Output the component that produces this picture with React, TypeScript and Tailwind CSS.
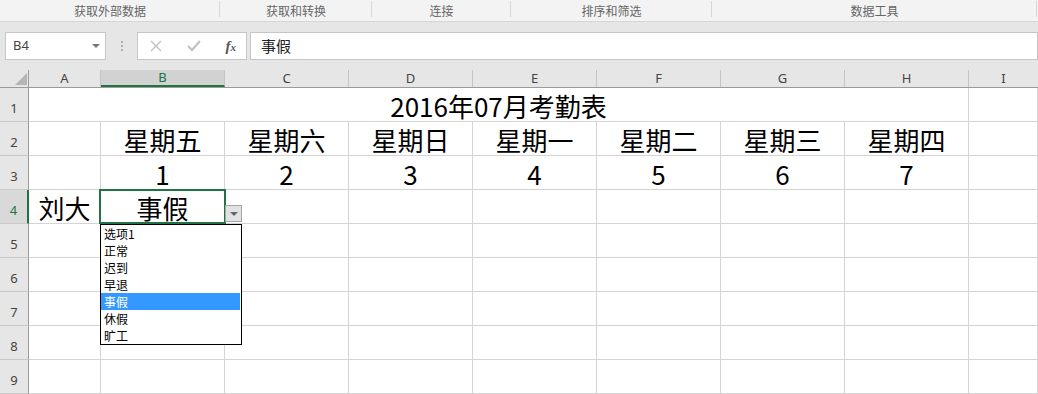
import React from "react";

const cjk = { fontFamily: '"Noto Sans CJK SC", "Noto Sans", sans-serif' };
const ui = { fontFamily: '"Noto Sans", "Noto Sans CJK SC", sans-serif' };

const groups = [
  { label: "获取外部数据", w: "w-[220px]" },
  { label: "获取和转换", w: "w-[152px]" },
  { label: "连接", w: "w-[139px]" },
  { label: "排序和筛选", w: "w-[201px]" },
  { label: "数据工具", w: "w-[325px]" },
];

const cols = ["A", "B", "C", "D", "E", "F", "G", "H"];
const weekdays = ["星期五", "星期六", "星期日", "星期一", "星期二", "星期三", "星期四"];
const options = ["选项1", "正常", "迟到", "早退", "事假", "休假", "旷工"];

const Cell = ({
  w,
  children,
  className = "",
}: {
  w: string;
  children?: React.ReactNode;
  className?: string;
}) => (
  <div
    className={`${w} shrink-0 h-full border-r border-b border-[#d4d4d4] flex items-end justify-center text-[26px] leading-[30px] text-black ${className}`}
    style={cjk}
  >
    {children}
  </div>
);

const RowHead = ({ n, active = false }: { n: number; active?: boolean }) => (
  <div
    className={`w-[29px] shrink-0 h-full flex items-end justify-center pb-[6px] text-[13px] leading-none border-b border-[#c9c9c9] border-r ${
      active
        ? "bg-[#d9d9d9] text-[#217346] border-r-2 border-r-[#217346]"
        : "bg-[#e6e6e6] text-[#444] border-r-[#9b9b9b]"
    }`}
    style={ui}
  >
    {n}
  </div>
);

export default function App() {
  return (
    <div className="w-[1038px] h-[394px] overflow-hidden bg-white select-none">
      {/* ribbon group labels */}
      <div className="h-[22px] bg-[#f3f3f3] border-b border-[#d6d6d6] flex">
        {groups.map((g) => (
          <div key={g.label} className={`${g.w} h-full flex items-center justify-center relative`}>
            <span className="text-[12px] text-[#666]" style={cjk}>
              {g.label}
            </span>
            <span className="absolute right-0 top-[1px] h-[16px] w-px bg-[#d6d6d6]" />
          </div>
        ))}
      </div>

      {/* formula bar */}
      <div className="h-[48px] bg-[#e6e6e6] flex items-start pt-[10px] pl-[5px]">
        <div className="w-[101px] h-[28px] bg-white border border-[#c6c6c6] flex items-center justify-between pl-[7px] pr-[5px]">
          <span className="text-[13px] text-[#444]" style={ui}>B4</span>
          <span className="w-0 h-0 border-l-[4px] border-r-[4px] border-t-[4px] border-l-transparent border-r-transparent border-t-[#777]" />
        </div>
        <div className="w-[31px] h-[28px] flex flex-col items-center justify-center gap-[2px]">
          <span className="w-[2px] h-[2px] bg-[#b0b0b0]" />
          <span className="w-[2px] h-[2px] bg-[#b0b0b0]" />
          <span className="w-[2px] h-[2px] bg-[#b0b0b0]" />
        </div>
        <div className="w-[110px] h-[28px] bg-white border border-[#c6c6c6] flex items-center justify-between pl-[12px] pr-[10px]">
          <svg width="12" height="12" viewBox="0 0 12 12">
            <path d="M1 1 L11 11 M11 1 L1 11" stroke="#c0c0c0" strokeWidth="1.3" />
          </svg>
          <svg width="14" height="12" viewBox="0 0 14 12">
            <path d="M1 6 L5 10 L13 1" stroke="#c0c0c0" strokeWidth="2" fill="none" />
          </svg>
          <span
            className="text-[15px] italic font-bold text-[#555] leading-none"
            style={{ fontFamily: '"Liberation Serif", serif' }}
          >
            f<span className="text-[11px]">x</span>
          </span>
        </div>
        <div className="ml-[3px] flex-1 h-[28px] bg-white border border-[#c6c6c6] flex items-center pl-[10px]">
          <span className="text-[15px] text-[#222]" style={cjk}>事假</span>
        </div>
      </div>

      {/* column headers */}
      <div className="h-[18px] bg-[#e6e6e6] flex border-b border-[#9b9b9b]">
        <div className="w-[29px] h-full border-r border-[#9b9b9b] flex items-end justify-end pr-[1px] pb-[2px]">
          <span
            className="w-0 h-0"
            style={{ borderBottom: "12px solid #b5b5b5", borderLeft: "12px solid transparent" }}
          />
        </div>
        {cols.map((c) => (
          <div
            key={c}
            className={`${c === "A" ? "w-[72px]" : "w-[124px]"} shrink-0 h-full border-r border-[#c4c4c4] flex items-center justify-center text-[13px] ${
              c === "B" ? "bg-[#d2d2d2] text-[#217346] border-b-2 border-b-[#217346]" : "text-[#444]"
            }`}
            style={ui}
          >
            {c}
          </div>
        ))}
        <div className="flex-1 h-full flex items-center justify-center text-[13px] text-[#444]" style={ui}>
          I
        </div>
      </div>

      {/* sheet */}
      <div className="relative">
        <div className="h-[34px] flex">
          <RowHead n={1} />
          <Cell w="w-[940px]">2016年07月考勤表</Cell>
          <Cell w="flex-1" />
        </div>
        <div className="h-[34px] flex">
          <RowHead n={2} />
          <Cell w="w-[72px]" />
          {weekdays.map((d) => (
            <Cell key={d} w="w-[124px]">{d}</Cell>
          ))}
          <Cell w="flex-1" />
        </div>
        <div className="h-[34px] flex">
          <RowHead n={3} />
          <Cell w="w-[72px]" />
          {weekdays.map((d, i) => (
            <Cell key={d} w="w-[124px]">{i + 1}</Cell>
          ))}
          <Cell w="flex-1" />
        </div>
        <div className="h-[34px] flex">
          <RowHead n={4} active />
          <Cell w="w-[72px]">刘大</Cell>
          <Cell w="w-[124px]" className="relative">
            事假
            <span className="absolute -left-[2px] -top-[1px] w-[127px] h-[35px] border-2 border-[#217346]" />
          </Cell>
          {weekdays.slice(1).map((d) => (
            <Cell key={d} w="w-[124px]" />
          ))}
          <Cell w="flex-1" />
        </div>
        {[5, 6, 7, 8, 9].map((n) => (
          <div key={n} className="h-[34px] flex">
            <RowHead n={n} />
            <Cell w="w-[72px]" />
            {weekdays.map((d) => (
              <Cell key={d} w="w-[124px]" />
            ))}
            <Cell w="flex-1" />
          </div>
        ))}

        {/* dropdown button */}
        <div className="absolute left-[225px] top-[117px] w-[17px] h-[17px] bg-[#e2e2e2] border border-[#a6a6a6] flex items-center justify-center">
          <span className="w-0 h-0 border-l-[4px] border-r-[4px] border-t-[4px] border-l-transparent border-r-transparent border-t-[#666]" />
        </div>

        {/* dropdown list */}
        <div className="absolute left-[100px] top-[136px] w-[142px] bg-white border border-black flex flex-col">
          {options.map((o) => (
            <div
              key={o}
              className={`h-[17px] pl-[3px] mr-[1px] flex items-center text-[12px] leading-none ${
                o === "事假" ? "bg-[#3399ff] text-white" : "text-black"
              }`}
              style={cjk}
            >
              {o}
            </div>
          ))}
        </div>
      </div>
    </div>
  );
}
